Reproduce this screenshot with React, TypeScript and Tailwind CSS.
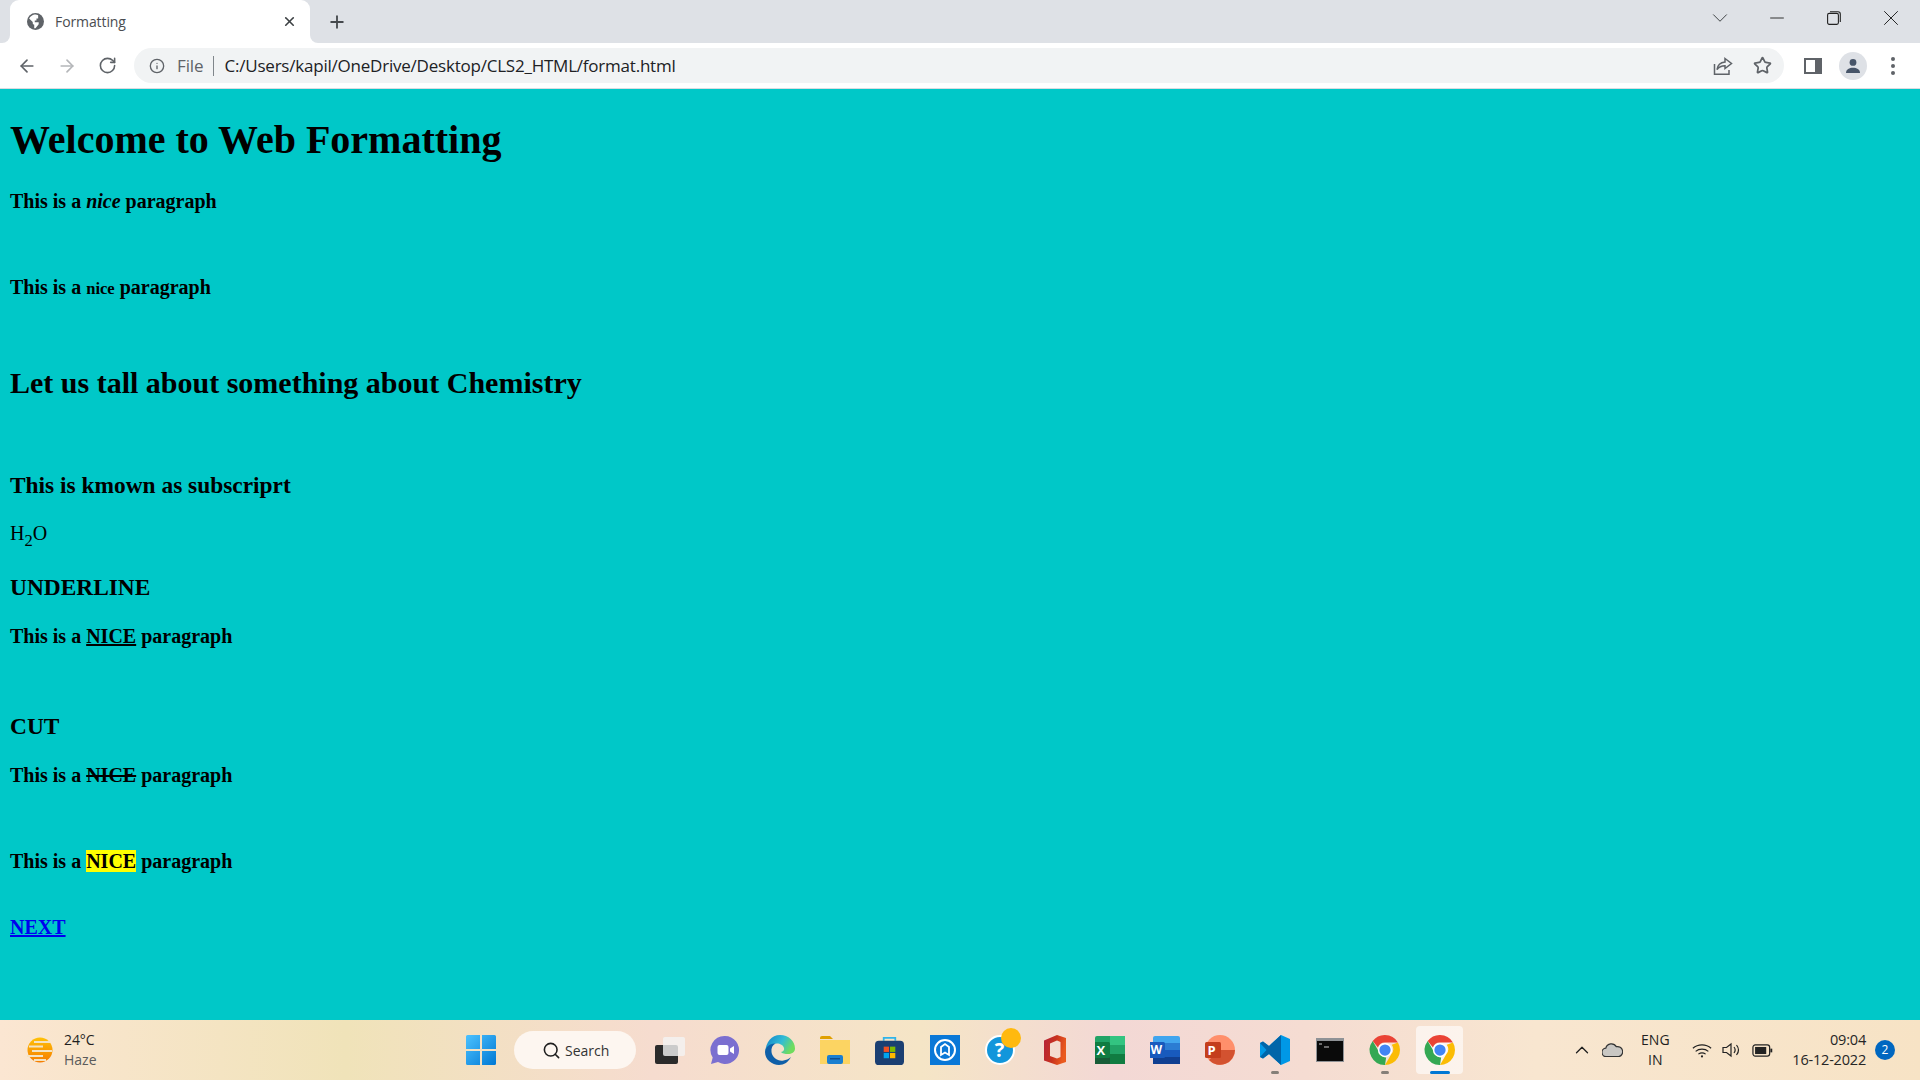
import { ArrowLeft, ArrowRight, RotateCw, Info, Star, Plus, X, ChevronDown, Minus, ChevronUp, Search } from "lucide-react";

const ChromeLogo = () => (
  <svg viewBox="0 0 48 48" className="relative w-[36px] h-[36px]">
    <path d="M24 4a20 20 0 0 1 17.3 10H24a10 10 0 0 0-9.4 6.6L7.6 12A20 20 0 0 1 24 4z" fill="#ea4335" />
    <path d="M41.3 14A20 20 0 0 1 24 44l8.7-15A10 10 0 0 0 33 17l8.3-3z" fill="#fbbc04" />
    <path d="M24 44A20 20 0 0 1 7.6 12l8.7 15a10 10 0 0 0 9.2 7L24 44z" fill="#34a853" />
    <circle cx="24" cy="24" r="9.5" fill="#fff" />
    <circle cx="24" cy="24" r="7.5" fill="#4285f4" />
  </svg>
);

const TaskIcon = ({ children, mark, active }: { children: React.ReactNode; mark?: boolean; active?: boolean }) => (
  <div className="relative w-[55px] h-[48px] flex items-center justify-center">
    {active && <span className="absolute inset-y-0 left-[4px] right-[4px] rounded bg-white/60" />}
    {children}
    {mark && <span className="absolute bottom-[0px] left-1/2 -translate-x-1/2 w-[8px] h-[3px] rounded-full bg-[#857f78]" />}
    {active && <span className="absolute bottom-[0px] left-1/2 -translate-x-1/2 w-[20px] h-[3px] rounded-full bg-[#0078d4]" />}
  </div>
);

export default function App() {
  return (
    <div className="w-[1920px] h-[1080px] flex flex-col overflow-hidden bg-[#00c8c8]">
      {/* tab strip */}
      <div className="h-[43px] bg-[#dee1e6] flex items-stretch shrink-0 font-['Open_Sans',sans-serif]">
        <div className="relative ml-[10px] w-[300px] bg-white rounded-t-[9px] flex items-center text-[#45494d]">
          <span className="absolute left-[-8px] bottom-0 w-[8px] h-[8px] bg-white" />
          <span className="absolute left-[-8px] bottom-0 w-[8px] h-[8px] bg-[#dee1e6] rounded-br-[8px]" />
          <span className="absolute right-[-8px] bottom-0 w-[8px] h-[8px] bg-white" />
          <span className="absolute right-[-8px] bottom-0 w-[8px] h-[8px] bg-[#dee1e6] rounded-bl-[8px]" />
          <svg viewBox="0 0 16 16" className="w-[17px] h-[17px] ml-[17px]">
            <circle cx="8" cy="8" r="8" fill="#5f6368" />
            <path d="M7 1.5C5 2 3 3.4 2 5.2l3.4 3.3v1.2c0 .8.7 1.3 1.4 1.3v3.3h1.2l3-3.6V8.8H7.3V7h1.6V5.2h1.6V2.2C9.7 1.7 8 1.4 7 1.5z" fill="#fff" />
          </svg>
          <span className="ml-[11px] text-[14px] text-[#4a4d51] tracking-[-0.1px]">Formatting</span>
          <X className="absolute right-[13px] top-[14px] w-[15px] h-[15px] text-[#3c4043]" strokeWidth={2.6} />
        </div>
        <div className="ml-[17px] flex items-center">
          <Plus className="w-[20px] h-[20px] text-[#45494d]" strokeWidth={2.2} />
        </div>
        <div className="ml-auto flex items-start text-[#3c4043]">
          <div className="w-[56px] h-[36px] flex items-center justify-center">
            <ChevronDown className="w-[26px] h-[26px]" strokeWidth={0.9} />
          </div>
          <div className="w-[57px] h-[36px] flex items-center justify-center">
            <Minus className="w-[22px] h-[22px] text-[#222]" strokeWidth={1} />
          </div>
          <div className="w-[57px] h-[36px] flex items-center justify-center">
            <svg viewBox="0 0 14 14" className="w-[14px] h-[14px]" fill="none" stroke="#222" strokeWidth="1.1">
              <rect x="0.6" y="2.4" width="10.8" height="11" rx="1.6" />
              <path d="M3 .7h8a2.3 2.3 0 0 1 2.3 2.3v8" />
            </svg>
          </div>
          <div className="w-[58px] h-[36px] flex items-center justify-center">
            <X className="w-[26px] h-[26px] text-[#222]" strokeWidth={0.9} />
          </div>
        </div>
      </div>

      {/* toolbar */}
      <div className="h-[46px] bg-white border-b border-[#dadce0] flex items-center shrink-0 font-['Open_Sans',sans-serif]">
        <ArrowLeft className="ml-[17px] w-[20px] h-[20px] text-[#5f6368]" strokeWidth={2} />
        <ArrowRight className="ml-[20px] w-[20px] h-[20px] text-[#b4b6b9]" strokeWidth={2} />
        <RotateCw className="ml-[21px] w-[19px] h-[19px] text-[#5f6368]" strokeWidth={2} />
        <div className="ml-[17px] w-[1650px] h-[35px] rounded-full bg-[#f1f3f4] flex items-center">
          <Info className="ml-[15px] w-[16px] h-[16px] text-[#5f6368]" strokeWidth={2} />
          <span className="ml-[12px] text-[17px] text-[#5f6368] tracking-[-0.1px]">File</span>
          <span className="ml-[9px] w-[1px] h-[20px] bg-[#80868b]" />
          <span className="ml-[11px] text-[17px] text-[#202124] tracking-[-0.22px]">C:/Users/kapil/OneDrive/Desktop/CLS2_HTML/format.html</span>
          <svg viewBox="0 0 20 20" className="ml-auto w-[20px] h-[20px]" fill="none" stroke="#5f6368" strokeWidth="1.5">
            <path d="M1.5 8v10.2h14.5V14" />
            <path d="M12 2.5l6.5 5-6.5 5V9.7c-3.5 0-6 1-8 4 .5-4 3-7.2 8-7.7z" />
          </svg>
          <Star className="ml-[20px] mr-[12px] w-[19px] h-[19px] text-[#5f6368]" strokeWidth={2.2} />
        </div>
        <svg viewBox="0 0 18 16" className="ml-[20px] w-[18px] h-[16px]">
          <rect width="18" height="16" fill="#5f6368" />
          <rect x="2" y="2" width="9" height="12" fill="#fff" />
        </svg>
        <div className="ml-[17px] w-[28px] h-[28px] rounded-full bg-[#dee1e6] flex items-center justify-center">
          <svg viewBox="0 0 16 16" className="w-[16px] h-[16px]" fill="#475569">
            <circle cx="8" cy="4.4" r="3.4" />
            <path d="M1 15c0-3.6 3.4-5.2 7-5.2s7 1.6 7 5.2z" />
          </svg>
        </div>
        <div className="ml-[24px] flex flex-col gap-[3px]">
          <span className="w-[4px] h-[4px] rounded-full bg-[#5f6368]" />
          <span className="w-[4px] h-[4px] rounded-full bg-[#5f6368]" />
          <span className="w-[4px] h-[4px] rounded-full bg-[#5f6368]" />
        </div>
      </div>

      {/* page */}
      <main className="flex-1 px-[10px] text-black text-[20px] leading-[23px] font-['Liberation_Serif',serif]">
        <h1 className="mt-[28px] text-[40px] leading-[46px] font-bold">Welcome to Web Formatting</h1>
        <p className="mt-[27px] font-bold">This is a <em>nice</em> paragraph</p>
        <p className="mt-[63px] font-bold">This is a <small className="text-[16.6px]">nice</small> paragraph</p>
        <h2 className="mt-[66px] text-[30px] leading-[34px] font-bold">Let us tall about something about Chemistry</h2>
        <h3 className="mt-[72px] text-[23.4px] leading-[27px] font-bold">This is kmown as subscriprt</h3>
        <p className="mt-[23px]">H<sub className="text-[16.6px] bottom-[-6px]">2</sub>O</p>
        <h3 className="mt-[29px] text-[23.4px] leading-[27px] font-bold">UNDERLINE</h3>
        <p className="mt-[24px] font-bold">This is a <u>NICE</u> paragraph</p>
        <h3 className="mt-[65px] text-[23.4px] leading-[27px] font-bold">CUT</h3>
        <p className="mt-[24px] font-bold">This is a <s>NICE</s> paragraph</p>
        <p className="mt-[63px] font-bold">This is a <mark className="bg-[#ffff00]">NICE</mark> paragraph</p>
        <a href="#next" className="block w-fit mt-[43px] text-[#0000ee] underline font-bold">NEXT</a>
      </main>

      {/* taskbar */}
      <footer className="h-[60px] shrink-0 flex items-center text-[#1f1f1f] font-['Open_Sans',sans-serif] bg-[linear-gradient(90deg,#fbe6d2_0%,#f0e3b9_18%,#f6dccf_34%,#f5e5c6_48%,#f3d8d5_58%,#f5dcd2_68%,#f8e6d0_80%,#f7e3c5_100%)]">
        <div className="w-[466px] flex items-center shrink-0">
          <svg viewBox="0 0 28 28" className="ml-[26px] w-[28px] h-[28px]">
            <defs>
              <linearGradient id="sun" x1="0" y1="0" x2="0" y2="1">
                <stop offset="0" stopColor="#ffc107" />
                <stop offset="1" stopColor="#f57c00" />
              </linearGradient>
            </defs>
            <circle cx="14" cy="14" r="12.5" fill="url(#sun)" />
            <path d="M8 6h16M3 10.5h14M6 15h20M1 20h16M8 24h12" stroke="#f3e3c4" strokeWidth="2" />
          </svg>
          <div className="ml-[10px] flex flex-col">
            <span className="text-[14px] leading-[20px] tracking-[-0.1px]">24°C</span>
            <span className="text-[14px] leading-[20px] tracking-[0px] text-[#5b5b5b]">Haze</span>
          </div>
        </div>
        <svg viewBox="0 0 30 30" className="w-[30px] h-[30px] shrink-0">
          <defs>
            <linearGradient id="win" x1="0" y1="0" x2="1" y2="1">
              <stop offset="0" stopColor="#4cc2ff" />
              <stop offset="1" stopColor="#0078d4" />
            </linearGradient>
          </defs>
          <path d="M0 1.5A1.5 1.5 0 0 1 1.5 0H14v14H0zM16 0h12.5A1.5 1.5 0 0 1 30 1.5V14H16zM0 16h14v14H1.5A1.5 1.5 0 0 1 0 28.500zM16 16h14v12.500a1.500 1.500 0 0 1-1.500 1.500H16z" fill="url(#win)" />
        </svg>
        <div className="ml-[18px] w-[122px] h-[38px] rounded-full bg-[#fdf6f0] flex items-center shrink-0">
          <Search className="ml-[28px] w-[19px] h-[19px] text-[#1f1f1f]" strokeWidth={2} />
          <span className="ml-[4px] text-[14px] text-[#333] tracking-[0px]">Search</span>
        </div>
        <div className="ml-[6px] flex items-center shrink-0">
          <TaskIcon>
            <svg viewBox="0 0 30 28" className="w-[30px] h-[28px]">
              <rect x="0" y="9" width="23" height="19" rx="2" fill="#2b2b2b" />
              <rect x="8" y="1" width="22" height="19" rx="2" fill="#f4f4f4" opacity="0.8" />
            </svg>
          </TaskIcon>
          <TaskIcon>
            <svg viewBox="0 0 30 30" className="w-[30px] h-[30px]">
              <path d="M15 1a14 14 0 1 1-7 26.100L1 29l1.700-6.500A14 14 0 0 1 15 1z" fill="#7b6fd0" />
              <rect x="7.500" y="10" width="11" height="10" rx="2" fill="#fff" />
              <path d="M20 13.500l4-2.500v8l-4-2.500z" fill="#fff" />
            </svg>
          </TaskIcon>
          <TaskIcon>
            <svg viewBox="0 0 30 30" className="w-[30px] h-[30px]">
              <defs>
                <linearGradient id="edge" x1="0" y1="0" x2="1" y2="0.4">
                  <stop offset="0" stopColor="#0f7fc9" />
                  <stop offset="0.6" stopColor="#32bcd5" />
                  <stop offset="1" stopColor="#6fdc5e" />
                </linearGradient>
              </defs>
              <path d="M15 0c8.500 0 15 6 15 13.500 0 4-3.500 5.500-7 5.500-3 0-6-.5-7-2 2.500-.5 3.500-2 3-4-.8-3-4-4.500-7-4.500-6 0-11 4-12 9C1 7 6.500 0 15 0z" fill="url(#edge)" />
              <path d="M0 17c.5-5 5-9 10.500-8.500C7.500 10 6 13 6.500 17c.8 6 6.500 9.500 12 8.500 2.500-.4 5-1.400 7.500-3.500-2.500 5-7 8-12 8-7 0-14-5.500-14-13z" fill="#0f5fa8" />
            </svg>
          </TaskIcon>
          <TaskIcon>
            <svg viewBox="0 0 30 28" className="w-[30px] h-[28px]">
              <path d="M0 2a2 2 0 0 1 2-2h8l3 3h-13z" fill="#e0a000" />
              <rect x="0" y="4" width="30" height="24" fill="#fcd462" />
              <rect x="7" y="19" width="16" height="9" rx="2" fill="#1a7fd0" />
              <rect x="10" y="22" width="10" height="1.500" fill="#0e4f8f" />
            </svg>
          </TaskIcon>
          <TaskIcon>
            <svg viewBox="0 0 30 30" className="w-[29px] h-[29px]">
              <path d="M9 5V2h12v3" fill="none" stroke="#2fb4ea" strokeWidth="1.800" />
              <rect x="0" y="5" width="30" height="25" rx="4" fill="#1b3f72" />
              <rect x="9" y="11" width="5.500" height="5.500" fill="#f25022" />
              <rect x="15.500" y="11" width="5.500" height="5.500" fill="#7fba00" />
              <rect x="9" y="17.500" width="5.500" height="5.500" fill="#00a4ef" />
              <rect x="15.500" y="17.500" width="5.500" height="5.500" fill="#ffb900" />
            </svg>
          </TaskIcon>
          <TaskIcon>
            <svg viewBox="0 0 30 30" className="w-[30px] h-[30px]">
              <rect width="30" height="30" fill="#0a78d7" />
              <circle cx="15" cy="15" r="10" fill="none" stroke="#fff" strokeWidth="2" />
              <path d="M11 20v-8l4-3 4 3v8l-4-2.500z" fill="none" stroke="#fff" strokeWidth="1.800" />
            </svg>
          </TaskIcon>
          <TaskIcon>
            <div className="relative w-[30px] h-[30px] rounded-full bg-[#1296db] border-2 border-white flex items-center justify-center text-white font-bold text-[20px]">
              ?
              <span className="absolute right-[-8px] top-[-9px] w-[20px] h-[20px] rounded-full bg-[#ffb90f]" />
            </div>
          </TaskIcon>
          <TaskIcon>
            <svg viewBox="0 0 22 30" className="w-[22px] h-[30px]">
              <defs>
                <linearGradient id="office" x1="0" y1="0" x2="1" y2="0.3">
                  <stop offset="0" stopColor="#b4213a" />
                  <stop offset="0.55" stopColor="#c8321e" />
                  <stop offset="1" stopColor="#ea5a1e" />
                </linearGradient>
              </defs>
              <path fillRule="evenodd" d="M13 0l9 3v24l-9 3-13-4.500V5.500zM13 5.500L6 8.500v12.500l7 2.500 3.500-1.500V7z" fill="url(#office)" />
            </svg>
          </TaskIcon>
          <TaskIcon>
            <div className="relative w-[30px] h-[28px]">
              <svg viewBox="0 0 30 28" className="w-[30px] h-[28px]">
                <rect width="30" height="28" rx="2" fill="#21a366" />
                <rect x="15" width="15" height="9" fill="#33c481" />
                <rect x="15" y="18" width="15" height="10" fill="#107c41" />
                <rect y="18" width="15" height="10" fill="#185c37" />
                <rect x="-1" y="6" width="16" height="16" rx="1.500" fill="#107c41" />
              </svg>
              <span className="absolute left-[2px] top-[5px] text-white font-bold text-[13px] leading-[18px]">X</span>
            </div>
          </TaskIcon>
          <TaskIcon>
            <div className="relative w-[30px] h-[28px]">
              <svg viewBox="0 0 30 28" className="w-[30px] h-[28px]">
                <rect x="3" width="27" height="28" rx="2" fill="#41a5ee" />
                <rect x="3" y="7" width="27" height="7" fill="#2b7cd3" />
                <rect x="3" y="14" width="27" height="7" fill="#185abd" />
                <rect x="3" y="21" width="27" height="7" fill="#103f91" />
                <rect x="-1" y="6" width="16" height="16" rx="1.500" fill="#185abd" />
              </svg>
              <span className="absolute left-[1px] top-[5px] text-white font-bold text-[12px] leading-[18px]">W</span>
            </div>
          </TaskIcon>
          <TaskIcon>
            <div className="relative w-[30px] h-[30px]">
              <svg viewBox="0 0 30 30" className="w-[30px] h-[30px]">
                <circle cx="15" cy="15" r="15" fill="#ff8f6b" />
                <path d="M15 15h15a15 15 0 0 1-26 10z" fill="#d35230" />
                <rect y="7" width="16" height="16" rx="1.500" fill="#c43e1c" />
              </svg>
              <span className="absolute left-[3px] top-[6px] text-white font-bold text-[13px] leading-[18px]">P</span>
            </div>
          </TaskIcon>
          <TaskIcon mark>
            <svg viewBox="0 0 30 30" className="w-[30px] h-[30px]">
              <path d="M21 0l9 4v22l-9 4-12-11-6 4.500-3-1.500v-14l3-1.500 6 4.500z" fill="#0098e6" />
              <path d="M21 7.500L12 15l9 7.500z" fill="#f4e6d4" />
              <path d="M21 0l-12 11-6-4.500-3 1.500 6.500 7L0 22l3 1.500 6-4.500 12 11z" fill="#0065a9" />
            </svg>
          </TaskIcon>
          <TaskIcon>
            <svg viewBox="0 0 28 24" className="w-[28px] h-[24px]">
              <rect width="28" height="24" fill="#8f9296" />
              <rect x="1" y="3" width="26" height="20" fill="#0a0a0a" />
              <path d="M3 6h3M8 9h5" stroke="#ccc" strokeWidth="1" />
            </svg>
          </TaskIcon>
          <TaskIcon mark><ChromeLogo /></TaskIcon>
          <TaskIcon active><ChromeLogo /></TaskIcon>
        </div>
        <div className="ml-auto flex items-center shrink-0">
          <ChevronUp className="w-[22px] h-[22px]" strokeWidth={1.4} />
          <svg viewBox="0 0 22 14" className="ml-[9px] w-[21px] h-[14px]">
            <path d="M5 14a4.500 4.500 0 0 1-1-9 6 6 0 0 1 11-1.500A5 5 0 0 1 17.500 14z" fill="#c9c7c3" stroke="#333" strokeWidth="1.300" />
          </svg>
          <div className="ml-[10px] w-[44px] flex flex-col items-center text-[14px] leading-[20px] tracking-[0px]">
            <span>ENG</span>
            <span>IN</span>
          </div>
          <svg viewBox="0 0 22 16" className="ml-[15px] w-[20px] h-[15px]" fill="none" stroke="#222" strokeWidth="1.300">
            <path d="M1 5.500c5.500-5 14.500-5 20 0M4 9c3.800-3.300 10.200-3.300 14 0M7 12c2.300-1.700 5.700-1.700 8 0" />
            <circle cx="11" cy="14.500" r="1.200" fill="#222" stroke="none" />
          </svg>
          <svg viewBox="0 0 20 16" className="ml-[10px] w-[20px] h-[16px]" fill="none" stroke="#222" strokeWidth="1.200">
            <path d="M1 5.500h3.500L9 2v12l-4.500-3.500H1z" />
            <path d="M12 5c1.400 1.800 1.400 4.200 0 6M14.500 3c2.400 3 2.400 7 0 10" />
          </svg>
          <svg viewBox="0 0 22 14" className="ml-[10px] w-[21px] h-[13px]">
            <rect x="0.700" y="1" width="18" height="12" rx="2.500" fill="none" stroke="#222" strokeWidth="1.300" />
            <rect x="3" y="3.200" width="12" height="7.600" fill="#222" />
            <rect x="19.500" y="5" width="2" height="4" fill="#222" />
          </svg>
          <div className="ml-[19px] flex flex-col items-end text-[14.5px] leading-[20px] tracking-[-0.2px] text-[#262626]">
            <span>09:04</span>
            <span>16-12-2022</span>
          </div>
          <div className="ml-[9px] mr-[25px] w-[20px] h-[20px] rounded-full bg-[#0067c0] text-white text-[12px] flex items-center justify-center">2</div>
        </div>
      </footer>
    </div>
  );
}
